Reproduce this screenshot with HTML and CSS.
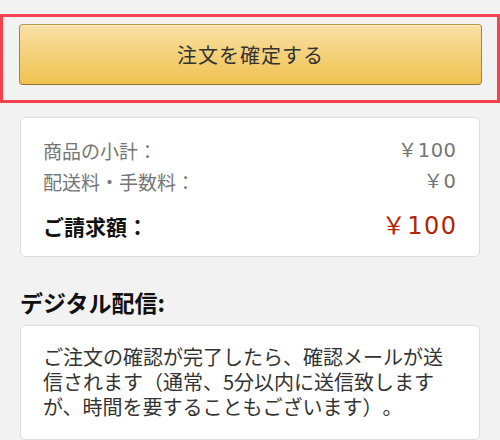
FILE: index.html
```html
<!DOCTYPE html>
<html lang="ja">
<head>
  <meta charset="UTF-8">
  <title>注文の確認</title>
  <link rel="stylesheet" href="styles.css">
</head>
<body>

<div class="place-order">
  <button class="btn-order">注文を確定する</button>
</div>

<div class="card summary">
  <div class="row">
    <span>商品の小計：</span>
    <span class="amount">￥100</span>
  </div>
  <div class="row">
    <span>配送料・手数料：</span>
    <span class="amount">￥0</span>
  </div>
  <div class="row total">
    <span>ご請求額：</span>
    <span class="amount price">￥100</span>
  </div>
</div>

<h2 class="section-title">デジタル配信:</h2>

<div class="card notice">
  <p>ご注文の確認が完了したら、確認メールが送信されます（通常、5分以内に送信致しますが、時間を要することもございます）。</p>
</div>

</body>
</html>
```

FILE: styles.css
```css
html {
  background-color: #f2f2f2;
}

body {
  margin: 0;
  font-family: "Noto Sans CJK JP", "Noto Sans", sans-serif;
  color: #111;
  text-spacing-trim: space-all;
}

.place-order {
  margin-top: 14px;
  border: 3px solid #f4414e;
  padding: 7px 15px 15px 16px;
}

.btn-order {
  display: block;
  width: 100%;
  height: 61px;
  border: 1px solid;
  border-color: #b8973f #a88734 #94762c;
  border-radius: 4px;
  background: linear-gradient(to bottom, #f8e0a6, #f0c24f);
  box-shadow: inset 0 1px 0 rgba(255, 255, 255, 0.5);
  font-family: inherit;
  font-size: 20px;
  letter-spacing: 1px;
  color: #333;
}

.card {
  margin: 0 20px;
  background: #fff;
  border: 1px solid #dedede;
  border-radius: 5px;
}

.summary {
  margin-top: 14px;
  padding: 17px 23px 13px 22px;
}

.row {
  display: flex;
  justify-content: space-between;
  align-items: center;
  height: 31px;
  font-size: 19px;
  line-height: 31px;
  color: #767676;
}

.amount {
  font-family: "DejaVu Sans", "Noto Sans CJK JP", sans-serif;
  font-size: 19.5px;
  letter-spacing: 0.5px;
  margin-right: -0.5px;
}

.row.total {
  margin-top: 12px;
  height: 34px;
  line-height: 34px;
  font-size: 21px;
  font-weight: bold;
  color: #111;
}

.row.total .price {
  font-size: 24px;
  font-weight: normal;
  letter-spacing: 1.5px;
  margin-right: -1.5px;
  color: #b12704;
}

.section-title {
  margin: 30px 20px 8px;
  font-size: 23px;
  line-height: 30px;
  font-weight: bold;
}

.notice {
  padding: 18px 35px 20px 22px;
}

.notice p {
  margin: 0;
  font-size: 20px;
  line-height: 25px;
  color: #333;
}
```
